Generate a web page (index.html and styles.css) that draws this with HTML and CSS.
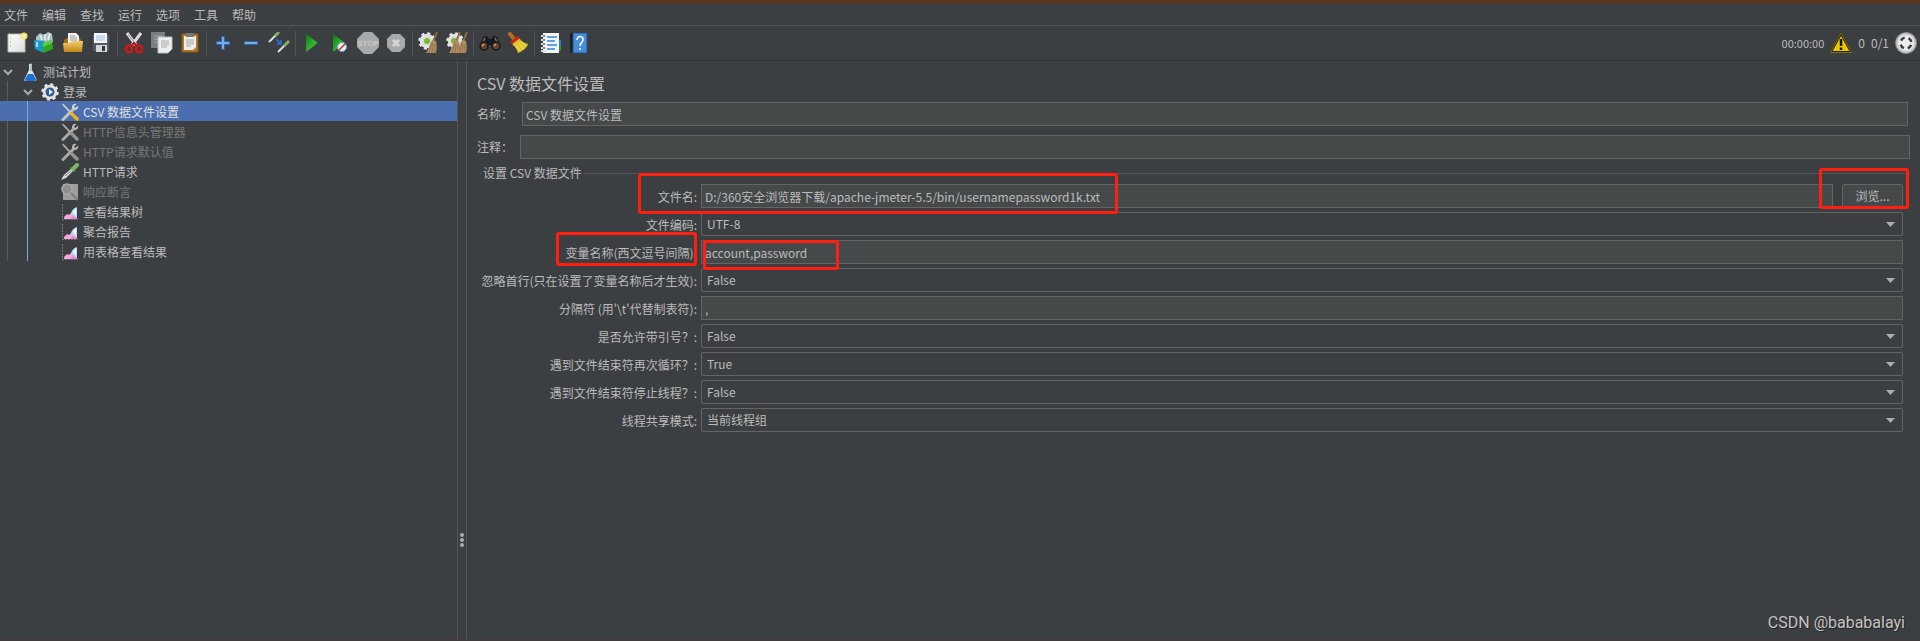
FILE: index.html
```html
<!DOCTYPE html>
<html lang="zh-CN">
<head>
  <meta charset="UTF-8" />
  <meta name="viewport" content="width=device-width, initial-scale=1.0" />
  <title>Apache JMeter</title>
  <link rel="stylesheet" href="styles.css">
</head>
<body>
  <!-- shared icons -->
  <svg class="defs" width="0" height="0" aria-hidden="true">
    <defs>
      <linearGradient id="gold" x1="0" y1="0" x2="0" y2="1">
        <stop offset="0" stop-color="#f0cf6c" /><stop offset="1" stop-color="#bf8516" />
      </linearGradient>
      <linearGradient id="green" x1="0" y1="0" x2="1" y2="1">
        <stop offset="0" stop-color="#0c7a10" /><stop offset="0.6" stop-color="#35b833" /><stop offset="1" stop-color="#0b650d" />
      </linearGradient>
      <linearGradient id="paper" x1="0" y1="0" x2="1" y2="1">
        <stop offset="0" stop-color="#fff" /><stop offset="1" stop-color="#dcdcdc" />
      </linearGradient>
      <symbol id="i-tools" viewBox="0 0 18 18">
        <path d="M1 1l2 .5 6.500 7-1 1-6.500-7z" fill="#ddd" stroke="#aaa" stroke-width=".5" />
        <path d="M2 16.500L12 6.500" stroke="#c4c4c4" stroke-width="3" stroke-linecap="round" />
        <path d="M15.500 1L13 3.500l1.500 1.500L17 2.500c1 3-1.500 5-4 4.500l-2-2c-.5-2.500 1.500-5 4.500-4z" fill="#d4d4d4" />
        <path class="handle" d="M10.500 10.500l5.500 5.500" stroke-width="3.500" stroke-linecap="round" />
      </symbol>
      <symbol id="i-chart" viewBox="0 0 18 18">
        <path d="M1.500 1v15.500H17" fill="none" stroke="#73777a" stroke-dasharray="2 1" />
        <path d="M3 16v-2l3-3 2 1 2-2 2 2 4 2v2z" fill="#f3a9d8" />
        <path d="M10 11c0-3 3-6 6-7v11c-2 0-3-3-6-4z" fill="#bcdcfa" />
        <path d="M12 9l3-4v7z" fill="#f4faff" />
        <path d="M9 16l3-3 4 2v1z" fill="#e887c8" />
      </symbol>
      <symbol id="i-gear" viewBox="0 0 18 18">
        <circle cx="9" cy="9" r="7.500" fill="none" stroke="#e8e8e8" stroke-width="2.500" stroke-dasharray="3 2.890" />
        <circle cx="9" cy="9" r="5.500" fill="none" stroke="#e2e2e2" stroke-width="3.500" />
      </symbol>
      <symbol id="i-broom" viewBox="0 0 12 22">
        <path d="M11 0L7 10" stroke="#8f6b45" stroke-width="2" />
        <path d="M6 8l4 1c1 5 1 8 0 12H0c3-4 3-8 6-13z" fill="#b08d63" />
        <path d="M6 11L3 21M7 12l-1 9M9 12v9" stroke="#8a6a46" stroke-width=".7" />
      </symbol>
    </defs>
  </svg>

  <nav class="menubar">
    <button class="menu">文件</button>
    <button class="menu">编辑</button>
    <button class="menu">查找</button>
    <button class="menu">运行</button>
    <button class="menu">选项</button>
    <button class="menu">工具</button>
    <button class="menu">帮助</button>
  </nav>

  <div class="toolbar">
    <button class="tool" aria-label="新建"><svg width="22" height="22" viewBox="0 0 22 22"><path d="M2 2h17v18H2z" fill="url(#paper)" stroke="#b9b9ae" /><path d="M4 6h1M4 10h1M4 14h1" stroke="#999" /><circle cx="18" cy="4" r="3.500" fill="#f1e26a" /><circle cx="18" cy="4" r="1.500" fill="#fffde0" /></svg></button>
    <button class="tool" aria-label="模板"><svg width="22" height="22" viewBox="0 0 22 22"><path d="M2 5l4-4 4 2 4-3 4 2 1 8H2z" fill="#a9c3c6" /><path d="M6 3l2 5M11 2v6M16 1l-2 7" stroke="#e9f1f1" stroke-width="1.500" /><path d="M0 8l10 1v12l-9-4z" fill="#199bc8" /><path d="M9 11l9-3 1 9-10 4z" fill="#31a71d" /><path d="M9 11l9-3v3l-9 4z" fill="#5dcd43" /><path d="M3 10v5" stroke="#9ce1fa" stroke-width="2" /></svg></button>
    <button class="tool" aria-label="打开"><svg width="22" height="22" viewBox="0 0 22 22"><path d="M2 8l3-2h13l2 5v9H2z" fill="#a36f11" /><path d="M6 1h8l3 3v8H6z" fill="#f2f2f2" /><path d="M8 4h5M8 6h7M8 8h7" stroke="#999" /><path d="M1 11h7l2-2h11l-1 11H2z" fill="url(#gold)" /></svg></button>
    <button class="tool" aria-label="保存"><svg width="22" height="22" viewBox="0 0 22 22"><path d="M2 2h18v18H4l-2-2z" fill="#555960" stroke="#303338" /><path d="M4 1h13v10H4z" fill="#f2f5fa" /><path d="M6 4h9M6 6h9M6 8h9" stroke="#a7bfdf" /><path d="M6 13h11v7H6z" fill="#d5d5d5" /><path d="M12 14h3v5h-3z" fill="#34383c" /></svg></button>
    <span class="sep"></span>
    <button class="tool" aria-label="剪切"><svg width="22" height="22" viewBox="0 0 22 22"><path d="M4 1l9 12M18 1L9 13" stroke="#dedede" stroke-width="3" /><path d="M5 2l8 11" stroke="#999" /><ellipse cx="6" cy="17" rx="3" ry="3.500" fill="none" stroke="#d31717" stroke-width="2.500" /><ellipse cx="16" cy="17" rx="3" ry="3.500" fill="none" stroke="#d31717" stroke-width="2.500" /><path d="M8 14l3-3 3 3" fill="none" stroke="#b41414" stroke-width="2" /></svg></button>
    <button class="tool" aria-label="复制"><svg width="22" height="22" viewBox="0 0 22 22"><path d="M0 0h14v16H0z" fill="#7b7f80" /><path d="M3 4h8M3 7h4M3 10h4" stroke="#a4a8a9" /><path d="M7 5h14v12l-4 4H7z" fill="#eee" stroke="#bcbcbc" /><path d="M10 9h8M10 11h8M10 13h8M10 15h6" stroke="#aaa" /></svg></button>
    <button class="tool" aria-label="粘贴"><svg width="22" height="22" viewBox="0 0 22 22"><path d="M3 2h16v18H3z" fill="#b97921" stroke="#8a5614" /><path d="M5 4h12v11l-3 3H5z" fill="#ededed" /><path d="M7 1h8v4H7z" fill="#77796e" /><path d="M7 8h8M7 10h8M7 12h8M7 14h5" stroke="#aaa" /></svg></button>
    <span class="sep"></span>
    <button class="tool" aria-label="展开"><svg width="22" height="22" viewBox="0 0 22 22"><path d="M9.500 4.500h3v5h5v3h-5v5h-3v-5h-5v-3h5z" fill="#78aee8" stroke="#2f64ad" /></svg></button>
    <button class="tool" aria-label="折叠"><svg width="22" height="22" viewBox="0 0 22 22"><path d="M4.500 9.500h13v3h-13z" fill="#78aee8" stroke="#2f64ad" /></svg></button>
    <button class="tool" aria-label="切换"><svg width="22" height="22" viewBox="0 0 22 22"><path d="M1 10l7-7" stroke="#ddd" stroke-width="2" /><path d="M7 4l4-4" stroke="#7fae67" stroke-width="3" /><path d="M10 20l7-7" stroke="#ddd" stroke-width="2" /><path d="M16 14l5-5" stroke="#7fae67" stroke-width="3" /><path d="M8 7l4 4M13 8v4H9" fill="none" stroke="#2475dc" stroke-width="1.500" /></svg></button>
    <span class="sep"></span>
    <button class="tool" aria-label="启动"><svg width="22" height="22" viewBox="0 0 22 22"><path d="M5 2l12 9L5 20z" fill="url(#green)" /></svg></button>
    <button class="tool" aria-label="不停顿开始"><svg width="22" height="22" viewBox="0 0 22 22"><path d="M4 2l12 9L4 20z" fill="url(#green)" /><circle cx="13" cy="15" r="4.500" fill="#e4eef4" stroke="#6fa3c8" /><path d="M10 18l6-6" stroke="#cf2a2a" stroke-width="1.500" /></svg></button>
    <button class="tool" aria-label="停止" disabled><svg width="22" height="22" viewBox="0 0 22 22"><path d="M7 0h8l7 7v8l-7 7H7l-7-7V7z" fill="#a9a9a9" /><text class="stop-text" x="11" y="14" text-anchor="middle">STOP</text></svg></button>
    <button class="tool" aria-label="关闭" disabled><svg width="22" height="22" viewBox="0 0 22 22"><path d="M7 2h8l5 5v8l-5 5H7l-5-5V7z" fill="#a9a9a9" /><path d="M8 8l6 6M14 8l-6 6" stroke="#d5d5d5" stroke-width="3" /></svg></button>
    <span class="sep"></span>
    <button class="tool" aria-label="清除"><svg width="22" height="22" viewBox="0 0 22 22"><use href="#i-gear" x="0" y="0" width="18" height="18" /><circle cx="9" cy="9" r="4" fill="#e2e2e2" /><circle cx="9" cy="9" r="3" fill="#79b82c" /><use href="#i-broom" x="8" y="0" width="12" height="22" /></svg></button>
    <button class="tool" aria-label="清除全部"><svg width="22" height="22" viewBox="0 0 22 22"><use href="#i-gear" x="0" y="0" width="18" height="18" /><circle cx="9" cy="9" r="4" fill="#e2e2e2" /><circle cx="8" cy="9" r="3" fill="#79b82c" /><use href="#i-broom" x="3" y="0" width="12" height="22" /><use href="#i-broom" x="10" y="0" width="12" height="22" /></svg></button>
    <span class="sep"></span>
    <button class="tool" aria-label="查找"><svg width="22" height="22" viewBox="0 0 22 22"><path d="M1 13L4 5l4-1 2 3h2l2-3 4 1 3 8-5 3-4-3H9l-4 3z" fill="#191b1c" /><path d="M6 6l-2 4M16 6l2 4" stroke="#777" stroke-width="1.500" /><circle cx="5" cy="14" r="4" fill="#65412e" stroke="#171717" stroke-width="1.500" /><circle cx="17" cy="14" r="4" fill="#65412e" stroke="#171717" stroke-width="1.500" /><path d="M3 14l2-2M15 14l2-2" stroke="#d89b76" stroke-width="1.500" /></svg></button>
    <button class="tool" aria-label="重置搜索"><svg width="22" height="22" viewBox="0 0 22 22"><path d="M3 2l5 6" stroke="#b36d22" stroke-width="4" stroke-linecap="round" /><path d="M12 6c2 3 5 5 9 6-1 4-5 7-10 9-1-4-3-6-6-9z" fill="#ddc22a" /><path d="M9 13l4 6M12 11l4 6M14 9l4 5" stroke="#f5e36a" /><path d="M4 11l8-6" stroke="#cc2418" stroke-width="3" /></svg></button>
    <span class="sep"></span>
    <button class="tool" aria-label="函数助手"><svg width="22" height="22" viewBox="0 0 22 22"><path d="M17 8h4v6h-4z" fill="#2582d9" /><path d="M17 14h4v5h-4z" fill="#239332" /><path d="M3 1h16v20H3z" fill="#f4f4f4" /><path d="M1 4h5M1 8h5M1 12h5M1 16h5M1 19h5" stroke="#dedede" stroke-width="2" /><path d="M3 4h2M3 8h2M3 12h2M3 16h2" stroke="#333" /><path d="M7 5h10M7 9h8M7 13h10M7 17h8" stroke="#2b85df" stroke-width="1.500" /></svg></button>
    <button class="tool" aria-label="帮助"><svg width="22" height="22" viewBox="0 0 22 22"><path d="M2 2l3-2v20l-3 1z" fill="#1b2024" /><path d="M5 1h14v20H5z" fill="#4a8edb" stroke="#234f83" /><path d="M9 8c0-5 7-4 6 0 0 2-3 3-3 6M12 16v2" fill="none" stroke="#fff" stroke-width="1.500" /></svg></button>

    <div class="status">
      <span class="clock">00:00:00</span>
      <svg width="22" height="22" viewBox="0 0 22 22"><path d="M11 2l10 18H1z" fill="#ecc707" stroke="#282406" stroke-width="2" /><path d="M11 1l10.500 19.500h-21z" fill="none" stroke="#a48f20" stroke-width=".7" /><path d="M11 7v7M11 15.500V18" stroke="#171717" stroke-width="2.500" /></svg>
      <span class="errors">0</span>
      <span class="threads">0/1</span>
      <svg width="22" height="22" viewBox="0 0 22 22"><circle cx="11" cy="11" r="10.500" fill="#c9c9c9" stroke="#898989" /><circle cx="11" cy="11" r="8" fill="#ececec" /><circle cx="11" cy="11" r="5.500" fill="none" stroke="#3b3e40" stroke-width="2.500" stroke-dasharray="4.600 4.040" stroke-dashoffset="-2" /></svg>
    </div>
  </div>

  <div class="main">
    <aside class="sidebar">
      <ul class="tree">
        <li>
          <div class="node"><svg class="arrow" viewBox="0 0 10 10"><path d="M1 3l4 4 4-4" /></svg><svg class="icon" viewBox="0 0 18 18"><path d="M8 1h3v6l4 8c1 2 0 3-1 3H5c-2 0-2-1-1-3l4-8z" fill="#d8e4ee" /><path d="M7 11h5l3 5-1 2H5l-1-2z" fill="#1c72d8" /><path d="M10 0v8" stroke="#8b9aa5" /></svg>测试计划</div>
          <ul class="branch">
            <li>
              <div class="node"><svg class="arrow" viewBox="0 0 10 10"><path d="M1 3l4 4 4-4" /></svg><svg class="icon" viewBox="0 0 18 18"><use href="#i-gear" /><circle cx="9" cy="9" r="4.500" fill="#315b91" /><path d="M8 6l4 3-4 3z" fill="#e8eff8" /></svg>登录</div>
              <ul class="branch active">
                <li class="node selected"><svg class="icon"><use href="#i-tools" /></svg>CSV 数据文件设置</li>
                <li class="node disabled"><svg class="icon"><use href="#i-tools" /></svg>HTTP信息头管理器</li>
                <li class="node disabled"><svg class="icon"><use href="#i-tools" /></svg>HTTP请求默认值</li>
                <li class="node"><svg class="icon" viewBox="0 0 18 18"><path d="M0 17l3-5 8-7 2 2-8 8z" fill="#dedede" /><path d="M4 13l6-5" stroke="#777" /><path d="M9.500 4.500l4 4" stroke="#528b3e" stroke-width="2" /><path d="M12 6l4-4" stroke="#7bb765" stroke-width="4" stroke-linecap="round" /></svg>HTTP请求</li>
                <li class="node disabled"><svg class="icon" viewBox="0 0 18 18"><path d="M2 1h15v16H2z" fill="#b6b6b6" /><circle cx="6" cy="6" r="5" fill="#a4a4a4" stroke="#c4c4c4" stroke-width="1.500" /><path d="M10 10l7 7" stroke="#8c8c8c" stroke-width="2" /></svg>响应断言</li>
                <li class="node"><svg class="icon"><use href="#i-chart" /></svg>查看结果树</li>
                <li class="node"><svg class="icon"><use href="#i-chart" /></svg>聚合报告</li>
                <li class="node"><svg class="icon"><use href="#i-chart" /></svg>用表格查看结果</li>
              </ul>
            </li>
          </ul>
        </li>
      </ul>
    </aside>

    <div class="splitter"><i></i><i></i><i></i></div>

    <section class="panel">
      <h1>CSV 数据文件设置</h1>
      <div class="field name"><label for="name">名称：</label><input id="name" type="text" value="CSV 数据文件设置"></div>
      <div class="field"><label for="comment">注释：</label><input id="comment" type="text"></div>

      <fieldset>
        <legend>设置 CSV 数据文件</legend>
        <div class="grid">
          <label for="filename">文件名:</label>
          <div class="file">
            <input id="filename" type="text" value="D:/360安全浏览器下载/apache-jmeter-5.5/bin/usernamepassword1k.txt">
            <span class="browse"><button type="button">浏览...</button><span class="mark mark-browse"></span></span>
            <span class="mark mark-file"></span>
          </div>

          <label for="encoding">文件编码:</label>
          <select id="encoding"><option>UTF-8</option></select>

          <label for="variables">变量名称(西文逗号间隔):<span class="mark mark-label"></span></label>
          <div class="cell"><input id="variables" type="text" value="account,password"><span class="mark mark-vars"></span></div>

          <label for="ignore">忽略首行(只在设置了变量名称后才生效):</label>
          <select id="ignore"><option>False</option><option>True</option></select>

          <label for="delimiter">分隔符 (用'\t'代替制表符):</label>
          <div class="cell"><input id="delimiter" type="text" value=","></div>

          <label for="quoted">是否允许带引号？:</label>
          <select id="quoted"><option>False</option><option>True</option></select>

          <label for="recycle">遇到文件结束符再次循环？:</label>
          <select id="recycle"><option>True</option><option>False</option></select>

          <label for="stop">遇到文件结束符停止线程？:</label>
          <select id="stop"><option>False</option><option>True</option></select>

          <label for="sharing">线程共享模式:</label>
          <select id="sharing"><option>当前线程组</option></select>
        </div>
      </fieldset>
      <div class="watermark">CSDN @bababalayi</div>
    </section>
  </div>
</body>
</html>
```
FILE: styles.css
```css
* {
  box-sizing: border-box;
}
body {
  margin: 0;
  min-height: 100vh;
  display: flex;
  flex-direction: column;
  border-top: 4px solid #573621;
  border-bottom: 2px solid #413b3e;
  background: #3c3f41;
  color: #bbbbbb;
  font: 12px/20px "Noto Sans CJK SC", sans-serif;
}
button, input, select {
  font: inherit;
  color: inherit;
}
.defs {
  position: absolute;
}

/* menu and toolbar */
.menubar {
  display: flex;
  gap: 14px;
  height: 22px;
  padding: 1px 0 0 4px;
  border-bottom: 1px solid #555555;
}
.menu, .tool {
  padding: 0;
  border: 0;
  background: none;
}
.toolbar {
  display: flex;
  align-items: center;
  gap: 6px;
  height: 35px;
  padding: 0 3px 0 6px;
  border-bottom: 1px solid #313436;
}
.tool {
  display: flex;
}
.sep {
  width: 1px;
  height: 25px;
  margin: 0 -1px;
  background: #515557;
}
.stop-text {
  font: bold 8px "Liberation Sans", sans-serif;
  fill: #c9c9c9;
}
.status {
  display: flex;
  align-items: center;
  gap: 6px;
  margin-left: auto;
}
.clock {
  font-size: 11px;
}

/* tree */
.main {
  display: flex;
  flex: 1;
}
.sidebar {
  width: 457px;
  flex: none;
  overflow: hidden;
}
.tree, .tree ul {
  margin: 0;
  padding: 0;
  list-style: none;
}
.node {
  display: flex;
  align-items: center;
  height: 20px;
  padding: 2px 0 0 3px;
}
.arrow {
  width: 10px;
  height: 10px;
  margin-right: 8px;
  fill: none;
  stroke: #a8abad;
  stroke-width: 2;
}
.icon {
  width: 18px;
  height: 18px;
  margin-right: 4px;
}
.branch {
  position: relative;
}
.branch .node {
  padding-left: 23px;
}
.branch .branch .node {
  padding-left: 61px;
}
.branch::before {
  content: "";
  position: absolute;
  top: 0;
  bottom: 0;
  left: 7px;
  width: 1px;
  background: #5b5e60;
}
.active::before {
  left: 27px;
  background: #75a9df;
}
.handle {
  stroke: var(--handle, #a8a8a8);
}
.selected {
  --handle: #edb41c;
  background: #4b6eaf;
  color: #e0e0e0;
}
.disabled {
  color: #777777;
}
.disabled .icon {
  opacity: 0.8;
}
.splitter {
  width: 10px;
  flex: none;
  display: flex;
  flex-direction: column;
  align-items: center;
  justify-content: center;
  gap: 1px;
  padding-top: 380px;
  border: 1px solid #555555;
  border-width: 0 1px;
}
.splitter i {
  width: 4px;
  height: 4px;
  border-radius: 2px;
  background: #adadad;
}

/* settings panel */
.panel {
  flex: 1;
  display: flex;
  flex-direction: column;
  min-width: 0;
  padding: 10px 10px 4px;
}
h1 {
  margin: 0 0 7px;
  font-size: 16px;
  line-height: 24px;
  font-weight: normal;
}
input, select {
  width: 100%;
  min-width: 0;
  height: 24px;
  margin: 0;
  padding: 0 3px;
  border: 1px solid #646464;
  border-radius: 0;
  background: #45494a;
  outline: 0;
}
select {
  appearance: none;
  padding: 0 5px;
  border-radius: 2px;
  background: #3c3f41 url("data:image/svg+xml,%3Csvg xmlns='http://www.w3.org/2000/svg' width='9' height='5'%3E%3Cpath d='M0 0h9L4.500 5z' fill='%23adadad'/%3E%3C/svg%3E") no-repeat right 7px center;
}
.field {
  display: flex;
  align-items: center;
}
.field label {
  flex: none;
  width: 43px;
  line-height: 24px;
}
.name {
  margin-bottom: 9px;
  padding-right: 2px;
}
.name label {
  width: 45px;
}
fieldset {
  min-width: 0;
  margin: 4px 5px 0 2px;
  padding: 1px 2px 0 0;
  border: 0 solid #555555;
  border-top-width: 1px;
}
legend {
  margin-left: 2px;
  padding: 0 2px;
}
.grid {
  display: grid;
  grid-template-columns: 218px 1fr;
  column-gap: 4px;
  row-gap: 4px;
}
.grid label {
  position: relative;
  height: 24px;
  line-height: 26px;
  text-align: right;
  white-space: nowrap;
}
.file, .cell, .browse {
  position: relative;
  display: flex;
}
.file {
  gap: 9px;
}
.browse button {
  width: 61px;
  height: 24px;
  border: 1px solid #646464;
  border-radius: 2px;
  background: #45494a;
}

/* red highlight boxes */
.mark {
  position: absolute;
  border: 3px solid #ff1e10;
  border-radius: 3px;
  pointer-events: none;
}
.mark-file {
  inset: -11px auto -6px -63px;
  width: 480px;
}
.mark-browse {
  inset: -16px -6px -1px -23px;
}
.mark-label {
  inset: -8px 0 -2px auto;
  width: 141px;
}
.mark-vars {
  inset: 0 auto -6px 2px;
  width: 136px;
}
.watermark {
  margin-top: auto;
  text-align: right;
  padding-right: 5px;
  font: 16px/24px Roboto, sans-serif;
  color: #c4c4c4;
  text-shadow: 1px 1px 1px #222222;
}
```
